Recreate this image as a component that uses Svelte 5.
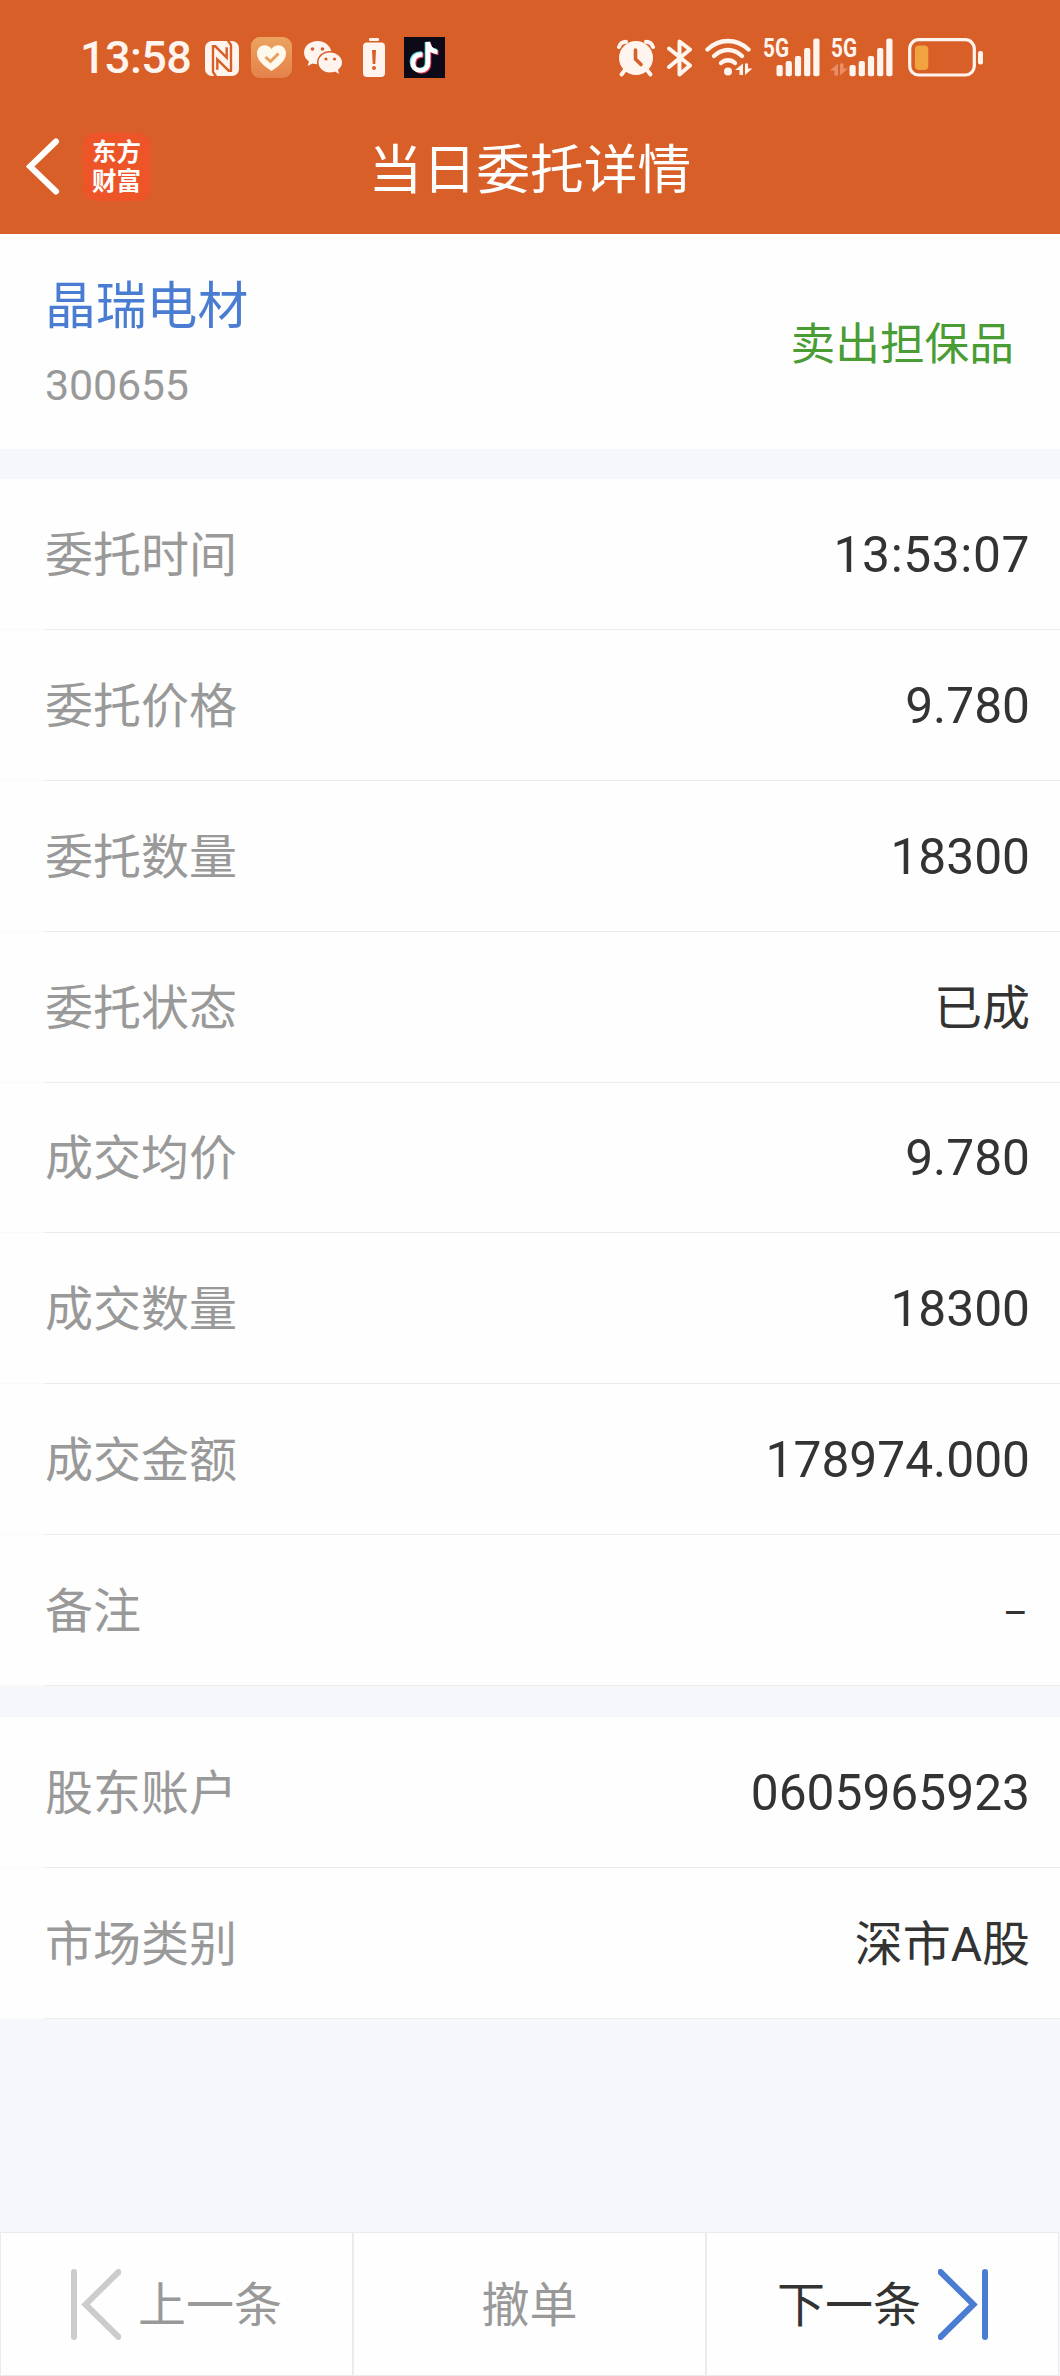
<script>
    const orderRows = [
        { label: "委托时间", value: "13:53:07", kind: "clock" },
        { label: "委托价格", value: "9.780" },
        { label: "委托数量", value: "18300" },
        { label: "委托状态", value: "已成", kind: "cjk" },
        { label: "成交均价", value: "9.780" },
        { label: "成交数量", value: "18300" },
        { label: "成交金额", value: "178974.000" },
        { label: "备注", value: "–", kind: "dash" },
    ];

    const accountRows = [
        { label: "股东账户", value: "0605965923" },
        { label: "市场类别", value: "深市A股", kind: "cjk" },
    ];

    // top edge of each signal bar, they all end at 39.3
    const bars = [28, 24, 19, 11, 1.5];
</script>

{#snippet rows(list)}
    {#each list as row}
        <div class="row">
            <span class="row-label">{row.label}</span>
            <span
                class="row-value"
                class:clock={row.kind === "clock"}
                class:cjk={row.kind === "cjk"}
                class:dash={row.kind === "dash"}>{row.value}</span
            >
        </div>
    {/each}
{/snippet}

<div class="page">
    <header class="header">
        <div class="status">
            <div class="status-left">
                <span class="time">13:58</span>

                <!-- nfc -->
                <svg class="nfc" width="34" height="41" viewBox="0 0 34 41">
                    <rect x="0" y="4" width="34" height="35" rx="7" fill="#fff5ee" />
                    <g fill="none" stroke="#d85f28" stroke-width="2.4">
                        <path d="M11 39.500L8 35V9.300H10.300L21.700 20.700V10.300" />
                        <path d="M23 3.500L26 8V33.700H23.700L12.300 22.300V32.700" />
                    </g>
                </svg>

                <!-- health app -->
                <svg class="health" width="41" height="41" viewBox="0 0 41 41">
                    <defs>
                        <linearGradient id="health-bg" x1="0" y1="0" x2="0" y2="1">
                            <stop offset="0" stop-color="#eba45f" />
                            <stop offset="1" stop-color="#e5814b" />
                        </linearGradient>
                    </defs>
                    <rect width="41" height="41" rx="9" fill="url(#health-bg)" />
                    <path
                        d="M20.500 34C15 30.500 6 24 6 16.500C6 8 16 5.500 20.500 12C25 5.500 35 8 35 16.500C35 24 26 30.500 20.500 34Z"
                        fill="#fff8ec"
                    />
                    <path d="M14.500 20L19.500 24.500L27.500 16.500" fill="none" stroke="#e6a25c" stroke-width="3" />
                </svg>

                <!-- wechat -->
                <svg class="wechat" width="38" height="41" viewBox="0 0 38 41">
                    <path
                        d="M13.500 4C6 4 0 9 0 15.500C0 19.500 2 22.500 5 24.500L3.500 29L8.500 26.500C10.500 27.200 13 27.300 15 27.200L27.500 15C26.500 8.500 20.500 4 13.500 4Z"
                        fill="#fff5ee"
                    />
                    <ellipse cx="26" cy="25.500" rx="13" ry="11.500" fill="#d85f28" />
                    <path
                        d="M26 15.500C19.500 15.500 14.500 20 14.500 25.500C14.500 31 19.500 35.500 26 35.500C28 35.500 29.500 35.200 31 34.600L35 37L34 32.800C36.500 31 38 28.500 38 25.500C38 20 32.500 15.500 26 15.500Z"
                        fill="#fff5ee"
                    />
                    <g fill="#d85f28">
                        <circle cx="8.500" cy="12" r="1.800" />
                        <circle cx="18.500" cy="12" r="1.800" />
                        <circle cx="22" cy="22" r="1.600" />
                        <circle cx="30.500" cy="22" r="1.600" />
                    </g>
                </svg>

                <!-- low battery -->
                <svg class="alert" width="22" height="41" viewBox="0 0 22 41">
                    <rect x="6" y="1" width="10" height="3" rx="1.200" fill="#fff5ee" />
                    <rect x="0" y="5.500" width="22" height="34.500" rx="4" fill="#fff5ee" />
                    <path d="M9 13H13L12.300 27H9.700Z" fill="#d85f28" />
                    <circle cx="11" cy="31" r="2" fill="#d85f28" />
                </svg>

                <!-- tiktok -->
                <svg class="tiktok" width="41" height="41" viewBox="0 0 41 41">
                    <rect width="41" height="41" fill="#0b0a16" />
                    <g fill="none" stroke-width="4.600">
                        <path d="M17.500 16.500C11.500 16 8 20 8 25C8 30 11 33 15.500 33C20 33 23 30 23 25.500V5C23.500 10 27 13.500 32.500 14" stroke="#62dfe4" />
                        <path d="M19.500 18.500C13.500 18 10 22 10 27C10 31 13 34.500 17.500 34.500C22 34.500 25 31.500 25 27V7C25.500 12 29 15.500 34.500 16" stroke="#e8415f" />
                        <path d="M18.500 17.500C12.500 17 9 21 9 26C9 30.500 12 33.500 16.500 33.500C21 33.500 24 30.500 24 26V5C24.500 11 28 14.500 33.500 15" stroke="#fff" />
                    </g>
                </svg>
            </div>

            <div class="status-right">
                <!-- alarm -->
                <svg width="38" height="41" viewBox="0 0 38 41">
                    <g fill="none" stroke="#fff5ee" stroke-linecap="round">
                        <path d="M2 10C3 6.500 5.500 4.800 9 4.800M29 4.800C32.500 4.800 35 6.500 36 10" stroke-width="4" />
                        <path d="M8 33L4.500 37.500M30 33L33.500 37.500" stroke-width="4" />
                    </g>
                    <circle cx="19" cy="21" r="17" fill="#fff5ee" />
                    <path d="M18.500 13V22L24 27.500" fill="none" stroke="#d85f28" stroke-width="3.600" stroke-linecap="round" />
                </svg>

                <!-- bluetooth -->
                <svg class="bluetooth" width="26" height="41" viewBox="0 0 26 41">
                    <path
                        d="M2 11.500L23 28.500L12.500 37.500V4.500L23 12.500L2 30"
                        fill="none"
                        stroke="#fff5ee"
                        stroke-width="4"
                        stroke-linecap="round"
                        stroke-linejoin="round"
                    />
                </svg>

                <!-- wifi -->
                <svg class="wifi" width="48" height="41" viewBox="0 0 48 41">
                    <g fill="none" stroke="#fff5ee" stroke-width="4.400" stroke-linecap="round">
                        <path d="M2.500 12.500C14.500 1.200 31.500 1.200 43.500 12.500" />
                        <path d="M9 19C17.500 11 28.500 11 37 19" />
                        <path d="M16 26C20 22.300 26 22.300 30 26" />
                    </g>
                    <circle cx="23" cy="34.500" r="4" fill="#fff5ee" />
                    <path d="M30 33L38 26.500V38H34.500V33ZM40 26.500H43V31.500H47.500L40 38Z" fill="#fff5ee" />
                </svg>

                <!-- signal, sim 1 -->
                <svg class="sim" width="57" height="50" viewBox="0 -9 57 50">
                    <text x="0" y="20" class="net" textLength="26" lengthAdjust="spacingAndGlyphs">5G</text>
                    {#each bars as top, i}
                        <rect x={13.5 + i * 9.2} y={top} width="6.2" height={39.3 - top} rx="2" fill="#fff5ee" />
                    {/each}
                </svg>

                <!-- signal, sim 2 -->
                <svg class="sim" width="63" height="50" viewBox="0 -9 63 50">
                    <text x="1" y="20" class="net" textLength="26" lengthAdjust="spacingAndGlyphs">5G</text>
                    <path d="M0 33.500L8 26.500V38.500H4.500V33.500ZM10 26.500H13.500V31.500H18L10 38.500Z" fill="#e98d66" />
                    {#each bars as top, i}
                        <rect x={19.5 + i * 9.2} y={top} width="6.2" height={39.3 - top} rx="2" fill="#fff5ee" />
                    {/each}
                </svg>

                <!-- battery -->
                <svg class="battery" width="76" height="41" viewBox="0 0 76 41">
                    <rect x="1.700" y="2.700" width="64.600" height="35.300" rx="9" fill="none" stroke="#fff5ee" stroke-width="3.200" />
                    <rect x="7" y="8.500" width="13.300" height="24.500" rx="4" fill="#f1a33f" />
                    <rect x="70" y="14" width="5" height="13.500" rx="2.200" fill="#fff5ee" />
                </svg>
            </div>
        </div>

        <div class="nav">
            <div class="nav-left">
                <svg width="34" height="57" viewBox="0 0 34 57">
                    <path d="M30 3.500L4 28.500L30 53.500" fill="none" stroke="#fff" stroke-width="6" stroke-linecap="round" />
                </svg>
                <div class="logo">东方<br />财富</div>
            </div>
            <h1>当日委托详情</h1>
            <div></div>
        </div>
    </header>

    <section class="stock">
        <div class="stock-info">
            <span class="stock-name">晶瑞电材</span>
            <span class="stock-code">300655</span>
        </div>
        <span class="stock-action">卖出担保品</span>
    </section>

    <section class="list">
        {@render rows(orderRows)}
    </section>

    <section class="list account">
        {@render rows(accountRows)}
    </section>

    <footer class="footer">
        <button class="prev">
            <svg width="50" height="71" viewBox="0 0 50 71">
                <path d="M3 3V68M47.500 3L14.500 35.500L47.500 68" fill="none" stroke="#ccc" stroke-width="6" stroke-linecap="round" />
            </svg>
            <span>上一条</span>
        </button>
        <button><span>撤单</span></button>
        <button class="next">
            <span>下一条</span>
            <svg width="50" height="71" viewBox="0 0 50 71">
                <path d="M47 3V68M2.500 3L35.500 35.500L2.500 68" fill="none" stroke="#4a7dd2" stroke-width="6" stroke-linecap="round" />
            </svg>
        </button>
    </footer>
</div>

<style>
    :global(body) {
        margin: 0;
        background: #f6f7fa;
    }

    .page {
        width: 100%;
        height: 2376px;
        display: flex;
        flex-direction: column;
        background: #f6f7fa;
        font-family: Roboto, "Noto Sans CJK SC", sans-serif;
        color: #333;
    }

    svg {
        display: block;
        flex: none;
    }

    /* header */
    .header {
        height: 234px;
        flex: none;
        background: #d85f28;
        color: #fff;
    }

    .status {
        box-sizing: border-box;
        height: 99px;
        padding: 37px 76px 0 80px;
        display: flex;
        justify-content: space-between;
        align-items: flex-start;
    }

    .status-left,
    .status-right {
        display: flex;
        align-items: flex-end;
        height: 41px;
    }

    .time {
        width: 125px;
        font-size: 45px;
        font-weight: 500;
        line-height: 41px;
        letter-spacing: -0.6px;
        color: #fff5ee;
    }

    .health,
    .wechat,
    .bluetooth,
    .wifi {
        margin-left: 12px;
    }

    .alert {
        margin-left: 21px;
    }

    .tiktok {
        margin-left: 19px;
    }

    .sim {
        margin-left: 10px;
    }

    .battery {
        margin-left: 15px;
    }

    .net {
        font-family: Roboto, sans-serif;
        font-size: 25px;
        font-weight: 700;
        fill: #fff5ee;
    }

    .nav {
        height: 135px;
        display: grid;
        grid-template-columns: 1fr auto 1fr;
        align-items: center;
    }

    .nav-left {
        display: flex;
        align-items: center;
        padding-left: 26px;
        gap: 23px;
    }

    .logo {
        box-sizing: border-box;
        width: 68px;
        height: 68px;
        padding: 3px 1px 0 0;
        border-radius: 13px;
        background: #ed5427;
        text-align: center;
        font-family: "Noto Sans CJK SC", sans-serif;
        font-size: 24.5px;
        font-weight: 700;
        line-height: 29px;
    }

    h1 {
        margin: 0;
        padding-bottom: 2px;
        font-family: "Noto Sans CJK SC", sans-serif;
        font-size: 53.8px;
        font-weight: 400;
        line-height: 70px;
    }

    /* stock */
    .stock {
        box-sizing: border-box;
        height: 215px;
        flex: none;
        padding: 6px 46px 0 45px;
        display: flex;
        justify-content: space-between;
        align-items: center;
        background: #fefefe;
    }

    .stock-info {
        display: flex;
        flex-direction: column;
        gap: 18px;
        padding-top: 2px;
    }

    .stock-name {
        font-size: 50.8px;
        line-height: 60px;
        color: #4a7dd2;
    }

    .stock-code {
        font-size: 43px;
        line-height: 60px;
        letter-spacing: -0.2px;
        color: #999;
    }

    .stock-action {
        font-size: 44.7px;
        line-height: 60px;
        color: #4a9c34;
    }

    /* rows */
    .list {
        margin-top: 30px;
        background: #fefefe;
    }

    .account {
        margin-top: 31px;
    }

    .row {
        box-sizing: border-box;
        height: 150.875px;
        padding: 0 30px 0 45px;
        display: flex;
        justify-content: space-between;
        align-items: center;
        background: linear-gradient(to right, #f9f9f9 45px, #ececec 45px) bottom / 100% 1px no-repeat;
    }

    .row-label {
        padding-top: 3px;
        font-size: 48px;
        line-height: 60px;
        color: #999;
    }

    .row-value {
        padding-top: 1px;
        font-size: 49.7px;
        line-height: 60px;
    }

    .row-value.clock {
        letter-spacing: 0.6px;
    }

    .row-value.cjk {
        padding-top: 3px;
        font-size: 48px;
    }

    .row-value.dash {
        padding-top: 5px;
        font-size: 38px;
        padding-right: 2px;
    }

    /* footer */
    .footer {
        margin-top: auto;
        height: 144px;
        display: grid;
        grid-template-columns: repeat(3, 353px);
    }

    button {
        border: 1px solid #ebebeb;
        background: #fefefe;
        padding: 0;
        display: flex;
        align-items: center;
        justify-content: center;
        gap: 18px;
        font-family: "Noto Sans CJK SC", sans-serif;
        font-size: 48px;
        line-height: 60px;
        color: #999;
    }

    button span {
        padding-bottom: 6px;
    }

    .prev,
    .next {
        gap: 17px;
    }

    .next {
        color: #333;
    }
</style>
